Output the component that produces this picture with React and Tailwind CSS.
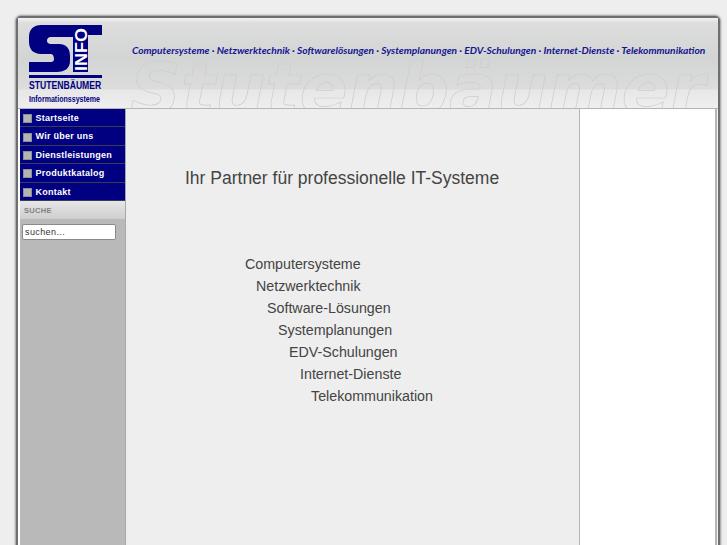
import React from 'react';

const navItems = ['Startseite', 'Wir über uns', 'Dienstleistungen', 'Produktkatalog', 'Kontakt'];

const services = [
  { label: 'Computersysteme', indent: 'pl-[119px]' },
  { label: 'Netzwerktechnik', indent: 'pl-[130px]' },
  { label: 'Software-Lösungen', indent: 'pl-[141px]' },
  { label: 'Systemplanungen', indent: 'pl-[152px]' },
  { label: 'EDV-Schulungen', indent: 'pl-[163px]' },
  { label: 'Internet-Dienste', indent: 'pl-[174px]' },
  { label: 'Telekommunikation', indent: 'pl-[185px]' },
];

const Logo = () => (
  <div className="relative w-[73px] ml-[11px] mt-[7px] shrink-0">
    <svg width="73" height="54" viewBox="0 0 73 54" className="block">
      {/* S */}
      <path
        d="M12 0 H44 V12 H22 C19 12 18 14 18 15.5 C18 17.5 19 19 22 19 H30 C38 19 41 24 41 31 V36 C41 43 36 47 28 47 H0 V37 H22 C24 37 25 36 25 34 C25 32 24 29 22 29 H12 C4 29 0 24 0 17 V12 C0 4 5 0 12 0 Z"
        fill="#000080"
      />
      {/* T */}
      <rect x="43" y="0" width="30" height="10" fill="#000080" />
      <rect x="44" y="0" width="15" height="47" fill="#000080" />
      <rect x="0" y="50" width="73" height="3" fill="#000080" />
      <text
        transform="translate(57.5 46) rotate(-90)"
        fill="#fff"
        fontSize="17"
        fontWeight="700"
        fontFamily="'Liberation Sans', sans-serif"
        textLength="43"
        lengthAdjust="spacingAndGlyphs"
      >
        INFO
      </text>
    </svg>
    <div className="text-[10.5px] leading-[12px] font-bold text-[#000080] whitespace-nowrap origin-left scale-x-[0.82] font-['Liberation_Sans',sans-serif]">
      STUTENBÄUMER
    </div>
    <div className="mt-[3px] text-[8.5px] leading-[11px] font-bold text-[#000080] whitespace-nowrap origin-left scale-x-[0.83] font-['Liberation_Sans',sans-serif]">
      Informationssysteme
    </div>
  </div>
);

const Header = () => (
  <header className="relative h-[90px] shrink-0 flex overflow-hidden bg-[linear-gradient(to_bottom,#f2f2f2_0px,#dddddd_5px,#d3d4d4_40px,#dcdcdc_71px,#e7e7e7_72px,#eeeeee_90px)]">
    <div className="absolute left-[112px] top-[46px] text-[71px] leading-[52px] font-bold italic whitespace-nowrap text-transparent [-webkit-text-stroke:0.7px_#cdcdcd] font-['DejaVu_Sans',sans-serif]">
      Stutenbäumer
    </div>
    <Logo />
    <div className="relative ml-[30px] mt-[25px] text-[10.2px] leading-[14px] font-bold italic text-[#14148f] whitespace-nowrap font-['Lato',sans-serif]">
      Computersysteme · Netzwerktechnik · Softwarelösungen · Systemplanungen · EDV-Schulungen · Internet-Dienste · Telekommunikation
    </div>
  </header>
);

const Sidebar = () => (
  <aside className="w-[106px] ml-[2px] shrink-0 bg-[#b9b9b9] border-r border-[#a8a8a8]">
    <nav>
      {navItems.map((item) => (
        <a
          key={item}
          href="#"
          className="flex items-center h-[18.4px] pl-[3px] pt-[2px] bg-[#000080] border-b border-[#3a3a5a] text-white text-[9px] font-bold tracking-[0.25px] no-underline"
        >
          <span className="w-[9px] h-[9px] mr-[3.5px] bg-[#b4b4b4] border border-[#8f8f8f] shrink-0" />
          <span className="font-['Liberation_Sans',sans-serif]">{item}</span>
        </a>
      ))}
    </nav>
    <div className="h-[18px] pl-[4px] pt-[2px] flex items-center bg-gradient-to-b from-[#e6e6e6] to-[#cfcfcf] text-[7.5px] font-bold tracking-[0.3px] text-[#808080] font-['Liberation_Sans',sans-serif]">
      SUCHE
    </div>
    <div className="pt-[5px] pl-[2px]">
      <input
        readOnly
        value="suchen..."
        className="block w-[94px] h-[16px] px-[2px] bg-white border border-[#8a8a8a] rounded-[2px] text-[9px] text-[#333] tracking-[0.4px] outline-none font-['Liberation_Sans',sans-serif]"
      />
    </div>
  </aside>
);

const Main = () => (
  <main className="flex-1 bg-[#eeeeee] text-[#444] font-['Liberation_Sans',sans-serif]">
    <h1 className="mt-[57px] ml-[59px] text-[17.5px] leading-[24px] font-normal whitespace-nowrap">
      Ihr Partner für professionelle IT-Systeme
    </h1>
    <ul className="mt-[63px]">
      {services.map((s) => (
        <li key={s.label} className={`${s.indent} text-[14.25px] leading-[22px] whitespace-nowrap`}>
          {s.label}
        </li>
      ))}
    </ul>
  </main>
);

const App = () => (
  <div className="h-[545px] overflow-hidden bg-[#eeeeee] pl-[16px] pr-[7px] pt-[16px]">
    <div className="h-[540px] flex flex-col bg-white border-2 border-[#6f6f6f] rounded-t-[5px] shadow-[0_0_2px_1px_#999999]">
      <Header />
      <div className="flex flex-1 border-t border-[#b5b5b5]">
        <Sidebar />
        <Main />
        <div className="w-[138px] shrink-0 bg-white border-l border-r-2 border-[#b5b5b5]" />
        <div className="w-[1px] shrink-0 bg-[#f2f2f2]" />
      </div>
    </div>
  </div>
);

export default App;
